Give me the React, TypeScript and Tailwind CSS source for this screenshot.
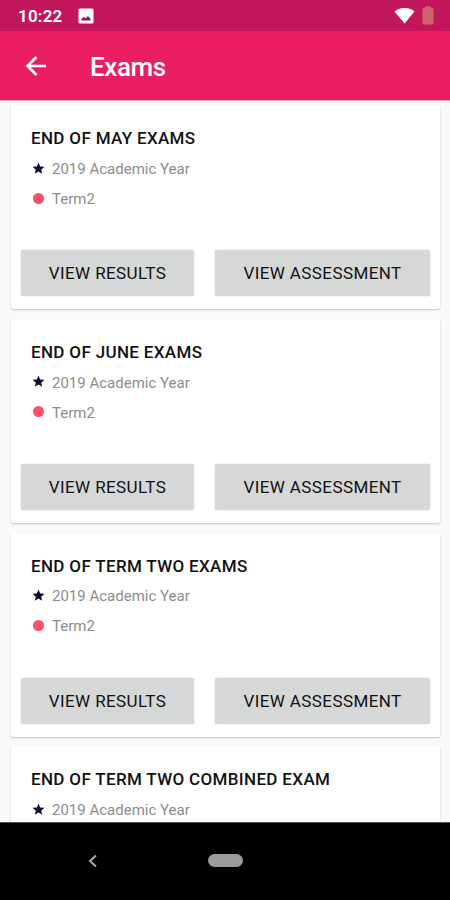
type Exam = {
  title: string;
  year: string;
  term: string;
};

const exams: Exam[] = [
  { title: "END OF MAY EXAMS", year: "2019 Academic Year", term: "Term2" },
  { title: "END OF JUNE EXAMS", year: "2019 Academic Year", term: "Term2" },
  { title: "END OF TERM TWO EXAMS", year: "2019 Academic Year", term: "Term2" },
  { title: "END OF TERM TWO COMBINED EXAM", year: "2019 Academic Year", term: "Term2" },
];

const StatusBar = () => (
  <div className="flex h-[31px] shrink-0 items-center bg-[#c2185b] pl-[18px] pr-[16px] text-white">
    <span className="mt-[2px] w-[60px] text-[17px] font-semibold leading-none tracking-[0.2px]">10:22</span>
    <svg width="16" height="16" viewBox="0 0 16 16">
      <rect x="0.5" y="0.5" width="15" height="15" rx="1.5" fill="#fff" />
      <path d="M3.500 12.500V11l2.200-2 2 1.300L10 8l2.500 3v1.500z" fill="#8e1650" />
    </svg>
    <svg className="ml-auto" width="21" height="17" viewBox="0 0 21 17">
      <path d="M0.500 4.500Q4 1 10.500 1T20.500 4.500L10.500 16.500z" fill="#fff" />
    </svg>
    <svg className="ml-[7px]" width="12" height="19" viewBox="0 0 12 19">
      <path
        d="M3.500 2V1h5v1H9.500a1.500 1.500 0 0 1 1.500 1.500V17a1 1 0 0 1-1 1H2a1 1 0 0 1-1-1V3.500A1.500 1.500 0 0 1 2.500 2z"
        fill="#c9646e"
        stroke="#e6625a"
      />
    </svg>
  </div>
);

const AppBar = () => (
  <header className="flex h-[69px] shrink-0 items-center bg-[#e91e63] pl-[25px] text-white">
    <svg width="22" height="22" viewBox="0 0 22 22" fill="none" stroke="#fff" strokeWidth="2.7">
      <path d="M21 11H2.500M11.500 2 2.500 11l9 9" />
    </svg>
    <h1 className="ml-[43px] mt-[3px] text-[26px] font-medium leading-none tracking-[-0.4px]">Exams</h1>
  </header>
);

const ExamCard = ({ exam }: { exam: Exam }) => (
  <div className="flex h-[204px] shrink-0 flex-col rounded-[2px] bg-white px-[10px] pb-[13px] pt-[22px] shadow-[0_1px_2px_rgba(0,0,0,0.22)]">
    <h2 className="px-[10px] text-[17px] font-medium leading-[22px] tracking-[0.34px] text-[#111]">{exam.title}</h2>
    <div className="mt-[10px] flex h-5 items-center px-[11px]">
      <svg className="-mt-[2px]" width="13" height="13" viewBox="1 1 22 22" fill="#0d0b30">
        <path d="M12 17.270 18.180 21l-1.640-7.030L22 9.240l-7.190-.610L12 2 9.190 8.630 2 9.240l5.460 4.730L5.820 21z" />
      </svg>
      <span className="ml-[7px] text-[15px] text-[#8c8c8c]">{exam.year}</span>
    </div>
    <div className="mt-[10px] flex h-5 items-center px-[11px]">
      <span className="-mt-[2px] ml-[1px] h-[11px] w-[11px] rounded-full bg-[#fb5067]" />
      <span className="ml-[8px] text-[15px] text-[#8c8c8c]">{exam.term}</span>
    </div>
    <div className="mt-auto flex gap-[21px]">
      <button className="h-[46px] w-[173px] rounded-[2px] bg-[#d6d8d7] pt-[2px] text-[17px] tracking-[0.4px] text-[#111] shadow-[0_0_2px_rgba(0,0,0,0.18)]">
        VIEW RESULTS
      </button>
      <button className="h-[46px] flex-1 rounded-[2px] bg-[#d6d8d7] pt-[2px] text-[17px] tracking-[0.4px] text-[#111] shadow-[0_0_2px_rgba(0,0,0,0.18)]">
        VIEW ASSESSMENT
      </button>
    </div>
  </div>
);

const NavBar = () => (
  <nav className="flex h-[78px] shrink-0 items-center border-t border-[#555] bg-black pb-[2px] pl-[88px]">
    <svg width="10" height="14" viewBox="0 0 10 14" fill="none" stroke="#aaa" strokeWidth="2">
      <path d="M8 1.500 2 7l6 5.500" />
    </svg>
    <span className="ml-[110px] h-[13px] w-[35px] rounded-full bg-[#9b9b9b]" />
  </nav>
);

const App = () => {
  return (
    <div className="flex h-[900px] w-[450px] flex-col overflow-hidden bg-[#fafafa] font-['Roboto',sans-serif]">
      <StatusBar />
      <AppBar />
      <main className="flex min-h-0 flex-1 flex-col gap-[9.8px] overflow-y-auto border-t border-[#f3a0bb] pl-[11px] pr-[10px] pt-[4px] [scrollbar-width:none]">
        {exams.map((exam) => (
          <ExamCard key={exam.title} exam={exam} />
        ))}
      </main>
      <NavBar />
    </div>
  );
};

export default App;
